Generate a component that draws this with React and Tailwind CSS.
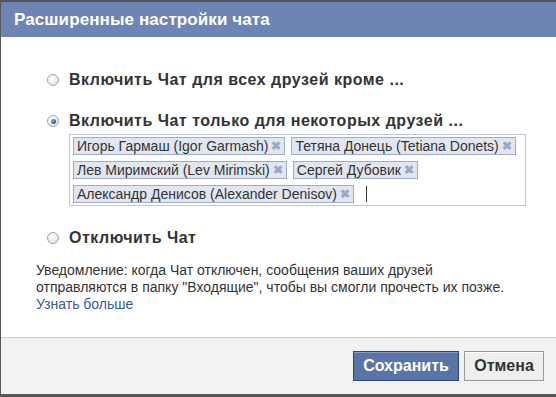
import React from "react";

const tokens = [
  ["Игорь Гармаш (Igor Garmash)", "Тетяна Донець (Tetiana Donets)"],
  ["Лев Миримский (Lev Mirimski)", "Сергей Дубовик"],
  ["Александр Денисов (Alexander Denisov)"],
];

function Radio({ checked }) {
  return (
    <span className="relative w-[12px] h-[12px] rounded-full border border-[#a7a7a7] bg-[radial-gradient(circle_at_40%_35%,#ffffff_0%,#f0f0f0_45%,#d2d2d2_100%)] shrink-0">
      {checked && (
        <span className="absolute left-[2.5px] top-[2.5px] w-[5px] h-[5px] rounded-full bg-[radial-gradient(circle_at_35%_35%,#6fb6e6_0%,#1f5f93_70%,#173e66_100%)]" />
      )}
    </span>
  );
}

function Option({ checked, children, className }) {
  return (
    <label className={`flex items-center h-[20px] pl-[46px] gap-[10px] ${className}`}>
      <Radio checked={checked} />
      <span className="text-[16px] tracking-[0.5px] font-bold text-[#333]">{children}</span>
    </label>
  );
}

function Token({ name }) {
  return (
    <span className="flex items-center h-[18px] px-[3px] gap-[3px] border border-[#9daccc] bg-[#e2e6f0] text-[14px] text-[#333] leading-none">
      {name}
      <span className="text-[12px] font-bold text-[#9aa8c8]">✖</span>
    </span>
  );
}

export default function App() {
  return (
    <div className="w-[556px] h-[397px] bg-[#575757] pl-px pt-[2px] pb-[3px] font-['Liberation_Sans',Arial,sans-serif]">
      <div className="flex flex-col h-full bg-white">
        {/* header */}
        <div className="h-[35px] shrink-0 bg-[#6d84b4] flex items-center px-[13px]">
          <h1 className="text-white font-bold text-[17px] tracking-[0.1px]">Расширенные настройки чата</h1>
        </div>

        {/* body */}
        <div className="flex-1 pt-[33px]">
          <Option>Включить Чат для всех друзей кроме ...</Option>
          <Option checked className="mt-[21px]">Включить Чат только для некоторых друзей ...</Option>

          <div className="ml-[68px] mt-[3px] w-[457px] border border-[#bdc7d8] px-[3px] py-[2px] flex flex-col gap-[6px]">
            {tokens.map((row, i) => (
              <div key={i} className="flex items-center gap-[6px]">
                {row.map((t) => (
                  <Token key={t} name={t} />
                ))}
                {i === 2 && <span className="ml-[6px] w-px h-[16px] bg-[#333]" />}
              </div>
            ))}
          </div>

          <Option className="mt-[22px]">Отключить Чат</Option>

          <p className="pl-[35px] mt-[14px] text-[14px] leading-[17px] text-[#333]">
            Уведомление: когда Чат отключен, сообщения ваших друзей
            <br />
            отправляются в папку "Входящие", чтобы вы смогли прочесть их позже.
            <br />
            <a href="#" className="text-[#3b5998]">Узнать больше</a>
          </p>
        </div>

        {/* footer */}
        <div className="h-[57px] shrink-0 border-t border-[#cccccc] bg-[#f2f2f2] flex items-center justify-end gap-[5px] pr-[12px]">
          <button className="h-[30px] w-[106px] border border-[#29447e] bg-[#5b74a8] shadow-[inset_0_1px_0_#8a9cc2] text-white font-bold text-[16px]">
            Сохранить
          </button>
          <button className="h-[30px] w-[80px] border border-[#999999] bg-[#eeeeee] shadow-[inset_0_1px_0_#ffffff] text-[#333] font-bold text-[16px]">
            Отмена
          </button>
        </div>
      </div>
    </div>
  );
}
